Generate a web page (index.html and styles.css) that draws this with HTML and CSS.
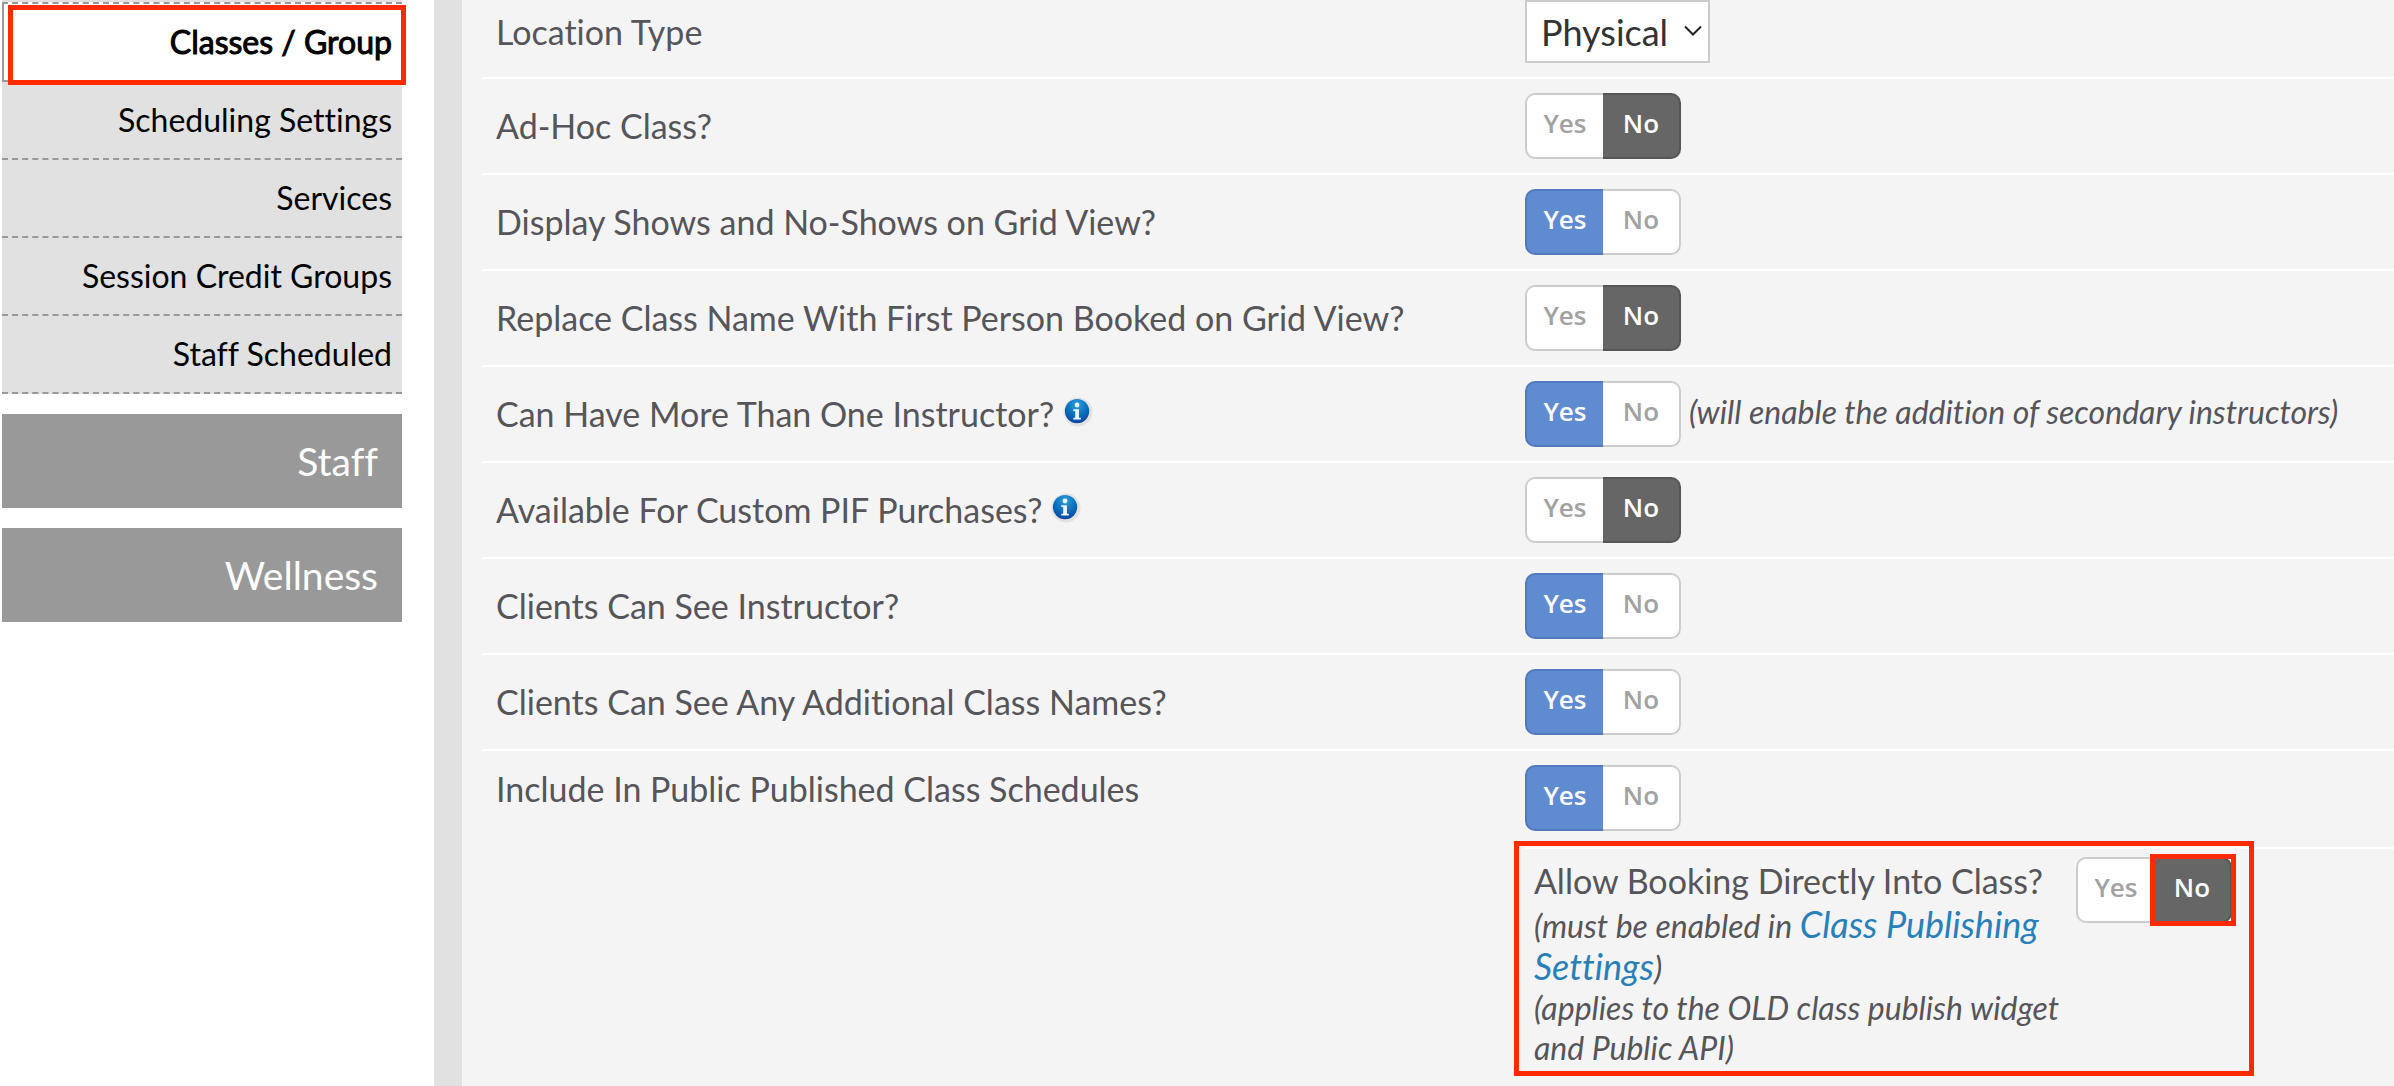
FILE: index.html
```html
<!DOCTYPE html>
<html lang="en">
<head>
  <meta charset="UTF-8" />
  <meta name="viewport" content="width=device-width, initial-scale=1" />
  <title>Classes / Group Settings</title>
  <link rel="stylesheet" href="styles.css">
</head>
<body>
  <nav class="sidebar">
    <ul class="submenu">
      <li class="current"><a href="#classes">Classes / Group</a></li>
      <li><a href="#scheduling">Scheduling Settings</a></li>
      <li><a href="#services">Services</a></li>
      <li><a href="#credits">Session Credit Groups</a></li>
      <li><a href="#scheduled">Staff Scheduled</a></li>
    </ul>
    <a class="section" href="#staff">Staff</a>
    <a class="section" href="#wellness">Wellness</a>
  </nav>

  <main class="content">
    <form class="settings">
      <div class="row first">
        <label class="name" for="locationType">Location Type</label>
        <div class="control">
          <div class="select">
            <select id="locationType">
              <option>Physical</option>
              <option>Virtual</option>
            </select>
            <svg width="18" height="12" viewBox="0 0 18 12" aria-hidden="true"><path d="M1 1.500l8 8 8-8" fill="none" stroke="#222" stroke-width="2"/></svg>
          </div>
        </div>
      </div>

      <div class="row">
        <div class="name" id="adhocName">Ad-Hoc Class?</div>
        <div class="control">
          <div class="toggle" role="radiogroup" aria-labelledby="adhocName">
            <label class="yes"><input type="radio" name="adhoc" value="1">Yes</label>
            <label class="no"><input type="radio" name="adhoc" value="0" checked>No</label>
          </div>
        </div>
      </div>

      <div class="row">
        <div class="name" id="showsName">Display Shows and No-Shows on Grid View?</div>
        <div class="control">
          <div class="toggle" role="radiogroup" aria-labelledby="showsName">
            <label class="yes"><input type="radio" name="shows" value="1" checked>Yes</label>
            <label class="no"><input type="radio" name="shows" value="0">No</label>
          </div>
        </div>
      </div>

      <div class="row">
        <div class="name" id="replaceName">Replace Class Name With First Person Booked on Grid View?</div>
        <div class="control">
          <div class="toggle" role="radiogroup" aria-labelledby="replaceName">
            <label class="yes"><input type="radio" name="replace" value="1">Yes</label>
            <label class="no"><input type="radio" name="replace" value="0" checked>No</label>
          </div>
        </div>
      </div>

      <div class="row">
        <div class="name" id="multiName">Can Have More Than One Instructor?
          <svg class="info" viewBox="0 0 32 32" aria-hidden="true">
            <defs>
              <radialGradient id="infoBlue" cx="50%" cy="25%" r="80%">
                <stop offset="0" stop-color="#2f9fe0"/>
                <stop offset="0.500" stop-color="#0b72c0"/>
                <stop offset="1" stop-color="#0a3f98"/>
              </radialGradient>
            </defs>
            <circle cx="16" cy="16" r="15.500" fill="#e2e2e2"/>
            <circle cx="15" cy="15" r="13" fill="url(#infoBlue)"/>
            <circle cx="15" cy="8.500" r="2.600" fill="#eef4fb"/>
            <path d="M11 13h6v9h2v2h-8v-2h2v-7h-2z" fill="#eef4fb"/>
          </svg>
        </div>
        <div class="control">
          <div class="toggle" role="radiogroup" aria-labelledby="multiName">
            <label class="yes"><input type="radio" name="multi" value="1" checked>Yes</label>
            <label class="no"><input type="radio" name="multi" value="0">No</label>
          </div>
          <em class="note">(will enable the addition of secondary instructors)</em>
        </div>
      </div>

      <div class="row">
        <div class="name" id="pifName">Available For Custom PIF Purchases?
          <svg class="info" viewBox="0 0 32 32" aria-hidden="true">
            <circle cx="16" cy="16" r="15.500" fill="#e2e2e2"/>
            <circle cx="15" cy="15" r="13" fill="url(#infoBlue)"/>
            <circle cx="15" cy="8.500" r="2.600" fill="#eef4fb"/>
            <path d="M11 13h6v9h2v2h-8v-2h2v-7h-2z" fill="#eef4fb"/>
          </svg>
        </div>
        <div class="control">
          <div class="toggle" role="radiogroup" aria-labelledby="pifName">
            <label class="yes"><input type="radio" name="pif" value="1">Yes</label>
            <label class="no"><input type="radio" name="pif" value="0" checked>No</label>
          </div>
        </div>
      </div>

      <div class="row">
        <div class="name" id="seeName">Clients Can See Instructor?</div>
        <div class="control">
          <div class="toggle" role="radiogroup" aria-labelledby="seeName">
            <label class="yes"><input type="radio" name="see" value="1" checked>Yes</label>
            <label class="no"><input type="radio" name="see" value="0">No</label>
          </div>
        </div>
      </div>

      <div class="row">
        <div class="name" id="namesName">Clients Can See Any Additional Class Names?</div>
        <div class="control">
          <div class="toggle" role="radiogroup" aria-labelledby="namesName">
            <label class="yes"><input type="radio" name="names" value="1" checked>Yes</label>
            <label class="no"><input type="radio" name="names" value="0">No</label>
          </div>
        </div>
      </div>

      <div class="row last">
        <div class="name" id="publicName">Include In Public Published Class Schedules</div>
        <div class="stack">
          <div class="control">
            <div class="toggle" role="radiogroup" aria-labelledby="publicName">
              <label class="yes"><input type="radio" name="public" value="1" checked>Yes</label>
              <label class="no"><input type="radio" name="public" value="0">No</label>
            </div>
          </div>
          <div class="booking">
            <div class="booking-text">
              <div class="booking-name" id="bookingName">Allow Booking Directly Into Class?</div>
              <em>(must be enabled in <a href="#publishing">Class Publishing Settings</a>)</em>
              <em>(applies to the OLD class publish widget and Public API)</em>
            </div>
            <div class="toggle" role="radiogroup" aria-labelledby="bookingName">
              <label class="yes"><input type="radio" name="booking" value="1">Yes</label>
              <label class="no marked"><input type="radio" name="booking" value="0" checked>No</label>
            </div>
          </div>
        </div>
      </div>
    </form>
  </main>
</body>
</html>
```
FILE: styles.css
```css
* {
  box-sizing: border-box;
}
body {
  margin: 0;
  min-height: 100vh;
  display: flex;
  background: #fff;
  color: #55555a;
  font-family: Lato, sans-serif;
  font-size: 34px;
  line-height: 40px;
  font-variant-ligatures: none;
}

/* sidebar */
.sidebar {
  flex: none;
  width: 402px;
  padding-left: 2px;
  text-align: right;
}
.submenu {
  margin: 0 0 20px;
  padding: 2px 0 0;
  list-style: none;
  background: #e1e1e1;
}
.submenu li {
  height: 78px;
  border-bottom: 2px dashed #999;
}
.submenu a {
  display: block;
  padding: 18px 10px;
  color: #000;
  font-size: 32px;
  text-decoration: none;
}
.submenu .current {
  position: relative;
  height: 80px;
  background: #fff;
  border-top: 2px dashed #999;
  border-bottom: 2px solid #999;
  border-left: 2px solid #999;
}
.current a {
  -webkit-text-stroke: 1px #000;
}
.current::after {
  content: "";
  position: absolute;
  inset: 1px -4px -5px 4px;
  border: 5px solid #ff2a00;
}
.section {
  display: block;
  margin-bottom: 20px;
  padding: 27px 24px;
  background: #999;
  color: #fff;
  font-size: 39px;
  text-decoration: none;
}

/* settings list */
.content {
  flex: 1;
  border-left: 28px solid #e1e1e1;
  margin-left: 32px;
  padding-left: 20px;
  background: #f4f4f4;
}
.row {
  display: grid;
  grid-template-columns: 6fr 5fr;
  align-items: center;
  border-bottom: 2px solid #fff;
}
.row .name {
  padding-left: 14px;
}
.control {
  display: flex;
  align-items: center;
  gap: 8px;
  padding: 14px 0;
}
.first .control {
  padding-top: 0;
}
.first .name {
  padding-bottom: 14px;
}
.select {
  position: relative;
}
.select select {
  appearance: none;
  display: block;
  width: 185px;
  height: 63px;
  padding: 0 14px;
  border: 2px solid #ccc;
  border-radius: 0;
  background: #fff;
  color: #333;
  font: inherit;
  font-size: 36px;
}
.select svg {
  position: absolute;
  right: 8px;
  top: 25px;
  pointer-events: none;
}
.info {
  width: 30px;
  height: 30px;
}
.note {
  padding-bottom: 4px;
  font-size: 32px;
}

/* yes / no switch */
.toggle {
  display: flex;
  flex: none;
  width: 156px;
  height: 66px;
  font-family: "Open Sans", sans-serif;
  font-size: 26px;
  font-weight: 600;
}
.toggle label {
  position: relative;
  flex: 1;
  padding-top: 8px;
  border: 2px solid #ccc;
  background: #fff;
  color: #a2a2a2;
  text-align: center;
}
.toggle input {
  position: absolute;
  opacity: 0;
}
.toggle .yes {
  border-right: 0;
  border-radius: 10px 0 0 10px;
}
.toggle .no {
  border-left: 0;
  border-radius: 0 10px 10px 0;
}
.toggle .yes:has(:checked) {
  background: #5f8bd0;
  border-color: #5179bb;
  color: #fff;
}
.toggle .no:has(:checked) {
  background: #666;
  border-color: #555;
  color: #fff;
}

/* public schedules */
.last {
  align-items: start;
  border-bottom: 0;
}
.last .name {
  padding-top: 18px;
}
.stack .control {
  padding-bottom: 16px;
  border-bottom: 2px solid #fff;
}
.booking {
  position: relative;
  display: flex;
  width: 720px;
  padding: 8px 0 0 9px;
}
.booking::after {
  content: "";
  position: absolute;
  inset: -8px -9px -8px -11px;
  border: 5px solid #ff2a00;
  pointer-events: none;
}
.booking-text {
  flex: none;
  width: 542px;
  padding-top: 4px;
}
.booking-name {
  padding-bottom: 3px;
}
.booking em {
  display: block;
  font-size: 32px;
}
.booking a {
  color: #2980b9;
  font-size: 36px;
  text-decoration: none;
}
.marked::after {
  content: "";
  position: absolute;
  inset: -5px -6px -5px -4px;
  border: 5px solid #ff2a00;
}
```
